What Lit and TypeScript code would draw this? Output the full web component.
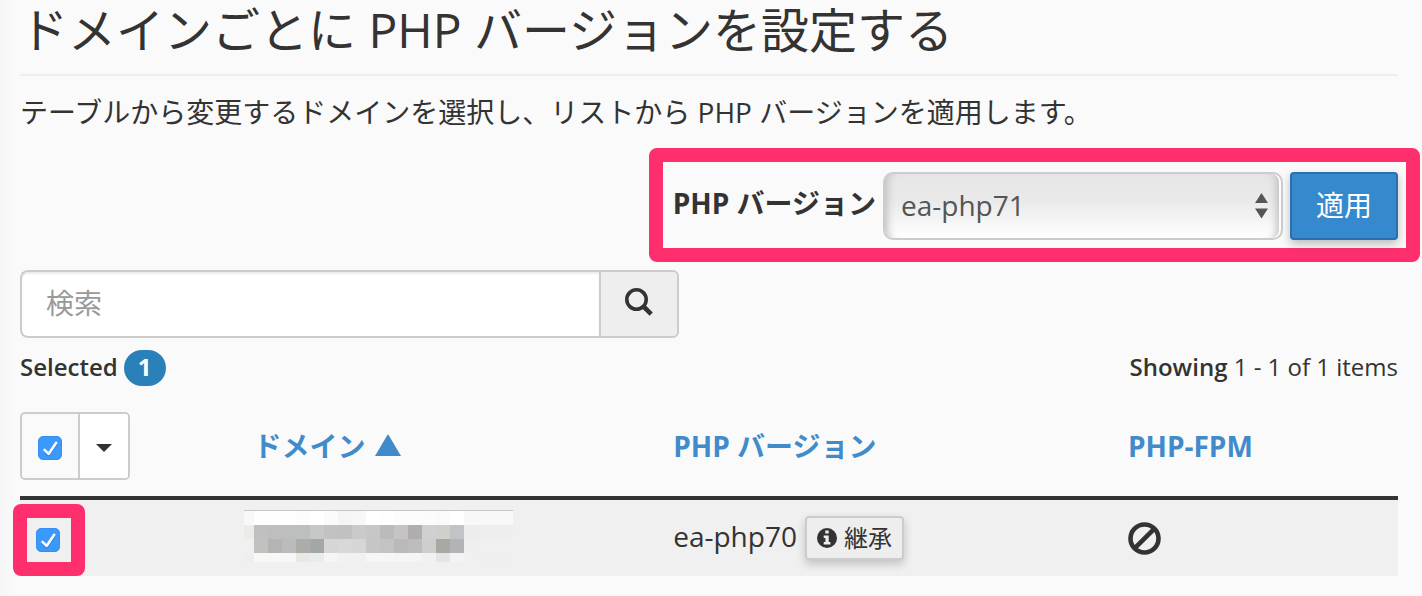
import { LitElement, html, css, svg } from "lit";
import { customElement, state } from "lit/decorators.js";

const MASK_COLUMNS = [0, 10, 24, 38, 52, 66, 80, 94, 108, 122, 136, 150, 164, 178, 192, 206, 220, 234, 269];
const MASK_ROWS = [
  { y: 1, h: 14, fill: ["#f8f8f8", "#fefefe", "#fefefe", "#fefefe", "#fcfcfc", "#ffffff", "#fbfbfb", "#f5f5f5", "#f7f7f7", "#ffffff", "#fefefe", "#fcfcfc", "#fcfcfc", "#fbfbfb", "#fafafa", "#ffffff", "#f8f8f8", "#f8f8f8"] },
  { y: 15, h: 14, fill: ["#ebebea", "#c0c0c0", "#bebebe", "#bdbebe", "#bbbfbd", "#c4c8c7", "#c2c2c2", "#c1c1c1", "#cacaca", "#c7c7c7", "#bbbbbb", "#c6c3c5", "#b0adae", "#d0d0d0", "#cdd0cb", "#c2c3c6", "#ecedec", "#eeeeee"] },
  { y: 29, h: 14, fill: ["#f0f0ee", "#c2c1be", "#b4b4b4", "#bbbbbb", "#acada8", "#a3a8a6", "#d6d6d6", "#d8d8d8", "#d6d6d6", "#c6c6c6", "#c3c3c3", "#bcb9bb", "#bdbdc0", "#d0cdcf", "#a7a9a2", "#b2b3b6", "#efefef", "#f0f0f0"] },
  { y: 43, h: 9, fill: ["#eeeeee", "#f7f7f7", "#f7f7f7", "#f7f7f7", "#e9e8e6", "#eaeceb", "#f5f5f5", "#f1f1f1", "#f1f1f1", "#f6f6f6", "#f6f6f6", "#f5f5f5", "#f5f5f5", "#f1f1f1", "#e4e4e4", "#f3f3f3", "#f0f0f0", "#efefef"] },
];

@customElement("app-root")
export class AppRoot extends LitElement {
  @state() private selected = true;

  static styles = css`
    :host {
      display: block;
      min-height: 100vh;
      box-sizing: border-box;
      padding: 0 24px 20px 20px;
      background: linear-gradient(to right, #f6f6f6, #fafafa 14px);
      color: #333;
      font-family: "Open Sans", "Noto Sans CJK JP", sans-serif;
      font-size: 28px;
      line-height: 40px;
    }
    *, *::before, *::after { box-sizing: border-box; }
    h1 {
      margin: 0 0 16px;
      height: 76px;
      border-bottom: 2px solid #eee;
      font-size: 48px;
      line-height: 60px;
      font-weight: 400;
      white-space: nowrap;
    }
    p { margin: 0 0 16px; white-space: nowrap; }
    button, input, select { font: inherit; color: inherit; margin: 0; }

    .apply-form {
      display: flex;
      align-items: center;
      gap: 7px;
      width: fit-content;
      margin: 0 -22px 8px auto;
      border: 14px solid #ff2f6e;
      border-radius: 8px;
      padding: 10px 8px 8px 10px;
    }
    .apply-form label { font-weight: 700; padding-bottom: 6px; }
    .version-box { position: relative; display: flex; }
    .version {
      appearance: none;
      width: 400px;
      height: 68px;
      padding: 0 16px 2px;
      border: 2px solid #ccc;
      border-radius: 10px;
      color: #555;
      background: linear-gradient(#e6e6e6, #e9e9e9 40%, #fff);
      box-shadow: inset 10px 0 8px -8px #bbb, inset -2px 0 0 #fff, inset -12px 0 8px -8px #bbb;
    }
    .version-arrows { position: absolute; right: 15px; top: 21px; pointer-events: none; }
    .apply {
      width: 108px;
      height: 68px;
      padding: 0 0 2px;
      border: 2px solid #2a6fb0;
      border-radius: 4px;
      background: #3789ce;
      color: #fff;
      box-shadow: 0 4px 10px rgba(0, 0, 0, 0.25);
    }

    .search { display: flex; width: 659px; max-width: 100%; height: 68px; }
    .search input {
      flex: 1;
      min-width: 0;
      padding: 0 24px 2px;
      border: 2px solid #ccc;
      border-right: 0;
      border-radius: 8px 0 0 8px;
      background: #fff;
      box-shadow: inset 0 2px 2px rgba(0, 0, 0, 0.075);
    }
    .search input::placeholder { color: #999; opacity: 1; }
    .search button {
      width: 80px;
      padding: 0 0 4px;
      display: grid;
      place-items: center;
      border: 2px solid #ccc;
      border-radius: 0 6px 6px 0;
      background: #eee;
    }

    .summary {
      display: flex;
      align-items: flex-start;
      justify-content: space-between;
      padding-top: 12px;
      font-size: 24px;
      line-height: 34px;
    }
    .summary b { font-weight: 600; }
    .count { display: flex; align-items: flex-start; gap: 6px; }
    .badge {
      width: 42px;
      padding-bottom: 2px;
      border-radius: 18px;
      background: #2a80b9;
      color: #fff;
      font-weight: 700;
      text-align: center;
    }

    table { width: 100%; margin-top: 26px; table-layout: fixed; border-collapse: collapse; text-align: left; }
    th, td { padding: 0; }
    .col-select { width: 16%; }
    .col-domain { width: 31.4%; }
    .col-version { width: 33%; }
    thead th { padding-bottom: 16px; border-bottom: 4px solid #333; }
    th a {
      display: inline-flex;
      align-items: center;
      gap: 10px;
      padding-bottom: 2px;
      color: #428bca;
      text-decoration: none;
      vertical-align: middle;
    }
    th a svg { margin-bottom: 2px; }
    .domain { padding-left: 13px; }
    tbody tr { height: 76px; background: #f0f0f0; }

    .select-all {
      display: flex;
      width: 110px;
      height: 68px;
      border: 2px solid #ccc;
      border-radius: 5px;
      overflow: hidden;
    }
    .select-all label { width: 56px; display: grid; place-items: center; padding-top: 4px; }
    .select-all button {
      flex: 1;
      padding: 4px 0 0;
      border: 0;
      border-left: 2px solid #ccc;
      background: #fff;
      display: grid;
      place-items: center;
    }
    input[type="checkbox"] {
      appearance: none;
      width: 24px;
      height: 24px;
      border-radius: 5px;
      border: 1px solid #bbb;
      background: #fff;
    }
    input[type="checkbox"]:checked {
      border-color: #3390f5;
      background: #3b99fc url("data:image/svg+xml,%3Csvg xmlns='http://www.w3.org/2000/svg' viewBox='0 0 22 22'%3E%3Cpath d='M5.5 13.2l4.1 4.1L17.2 6.2' transform='translate(0 1)' fill='none' stroke='%232374c8' stroke-width='2.6' stroke-linecap='round' stroke-linejoin='round' opacity='.6'/%3E%3Cpath d='M5.5 12.8l4.1 4.1L17.2 5.8' fill='none' stroke='white' stroke-width='2.6' stroke-linecap='round' stroke-linejoin='round'/%3E%3C/svg%3E") center / 100% no-repeat;
    }
    .picked {
      display: grid;
      place-items: center;
      width: 72px;
      height: 72px;
      margin: 4px 0 0 -7px;
      padding-right: 2px;
      border: 14px solid #ff2f6e;
      border-radius: 8px;
    }
    .mask, svg { display: block; }
    .mask { margin-top: -4px; margin-left: 4px; }
    .php { display: flex; align-items: center; gap: 8px; padding-bottom: 4px; }
    .inherit {
      display: flex;
      align-items: center;
      gap: 7px;
      height: 44px;
      margin-top: 4px;
      padding: 0 10px;
      border: 2px solid #ccc;
      border-radius: 4px;
      background: #eee;
      font-size: 24px;
      box-shadow: 0 4px 10px rgba(0, 0, 0, 0.2);
    }
  `;

  private toggle(e: Event) {
    this.selected = (e.target as HTMLInputElement).checked;
  }

  private renderMask() {
    return html`<svg class="mask" width="269" height="52" viewBox="0 0 269 52" role="img" aria-label="ドメイン" shape-rendering="crispEdges">
      <rect width="269" height="1" fill="#c6c6c6"></rect>
      ${MASK_ROWS.map((row) =>
        row.fill.map((color, i) =>
          svg`<rect x=${MASK_COLUMNS[i]} y=${row.y} width=${MASK_COLUMNS[i + 1] - MASK_COLUMNS[i]} height=${row.h} fill=${color}></rect>`
        )
      )}
    </svg>`;
  }

  render() {
    return html`
      <h1>ドメインごとに PHP バージョンを設定する</h1>
      <p>テーブルから変更するドメインを選択し、リストから PHP バージョンを適用します。</p>

      <form class="apply-form" @submit=${(e: Event) => e.preventDefault()}>
        <label for="version">PHP バージョン</label>
        <div class="version-box">
          <select id="version" class="version">
            <option>ea-php71</option>
            <option>ea-php70</option>
          </select>
          <svg class="version-arrows" width="13" height="26" viewBox="0 0 13 26" fill="#555" aria-hidden="true">
            <path d="M6.5 0L13 10H0zM0 15.500h13L6.500 25.500z"></path>
          </svg>
        </div>
        <button class="apply">適用</button>
      </form>

      <div class="search">
        <input type="text" placeholder="検索" aria-label="検索" />
        <button type="button" aria-label="検索">
          <svg width="28" height="28" viewBox="0 0 28 28" fill="none" stroke="#333" aria-hidden="true">
            <circle cx="11.500" cy="11.500" r="9.700" stroke-width="3.600"></circle>
            <path d="M18 18l8.200 8.200" stroke-width="4.600"></path>
          </svg>
        </button>
      </div>

      <div class="summary">
        <div class="count"><b>Selected</b><span class="badge">1</span></div>
        <div><b>Showing</b> 1 - 1 of 1 items</div>
      </div>

      <table>
        <colgroup>
          <col class="col-select" /><col class="col-domain" /><col class="col-version" /><col />
        </colgroup>
        <thead>
          <tr>
            <th>
              <div class="select-all">
                <label><input type="checkbox" aria-label="Select all" .checked=${this.selected} @change=${this.toggle} /></label>
                <button type="button" aria-label="Menu">
                  <svg width="16" height="8" viewBox="0 0 16 8" fill="#333" aria-hidden="true"><path d="M0 0h16L8 8z"></path></svg>
                </button>
              </div>
            </th>
            <th class="domain">
              <a href="#">ドメイン
                <svg width="26" height="22" viewBox="0 0 26 22" fill="#428bca" aria-hidden="true"><path d="M13 0l13 22H0z"></path></svg>
              </a>
            </th>
            <th><a href="#">PHP バージョン</a></th>
            <th><a href="#">PHP-FPM</a></th>
          </tr>
        </thead>
        <tbody>
          <tr>
            <td>
              <label class="picked"><input type="checkbox" aria-label="Select row" .checked=${this.selected} @change=${this.toggle} /></label>
            </td>
            <td>${this.renderMask()}</td>
            <td>
              <div class="php">
                <span>ea-php70</span>
                <button type="button" class="inherit">
                  <svg width="20" height="20" viewBox="0 0 20 20" aria-hidden="true">
                    <circle cx="10" cy="10" r="10" fill="#333"></circle>
                    <path d="M8.300 2.500h3.400v3H8.300zM6.700 7.500h5v6.500h1.700v2.500H6.700V14h1.700v-4H6.700z" fill="#eee"></path>
                  </svg>
                  <span>継承</span>
                </button>
              </div>
            </td>
            <td>
              <svg width="33" height="33" viewBox="0 0 33 33" fill="none" stroke="#333" stroke-width="4.600" role="img" aria-label="Disabled">
                <circle cx="16.500" cy="16.500" r="14"></circle>
                <path d="M6.800 26.200L26.200 6.800"></path>
              </svg>
            </td>
          </tr>
        </tbody>
      </table>
    `;
  }
}
